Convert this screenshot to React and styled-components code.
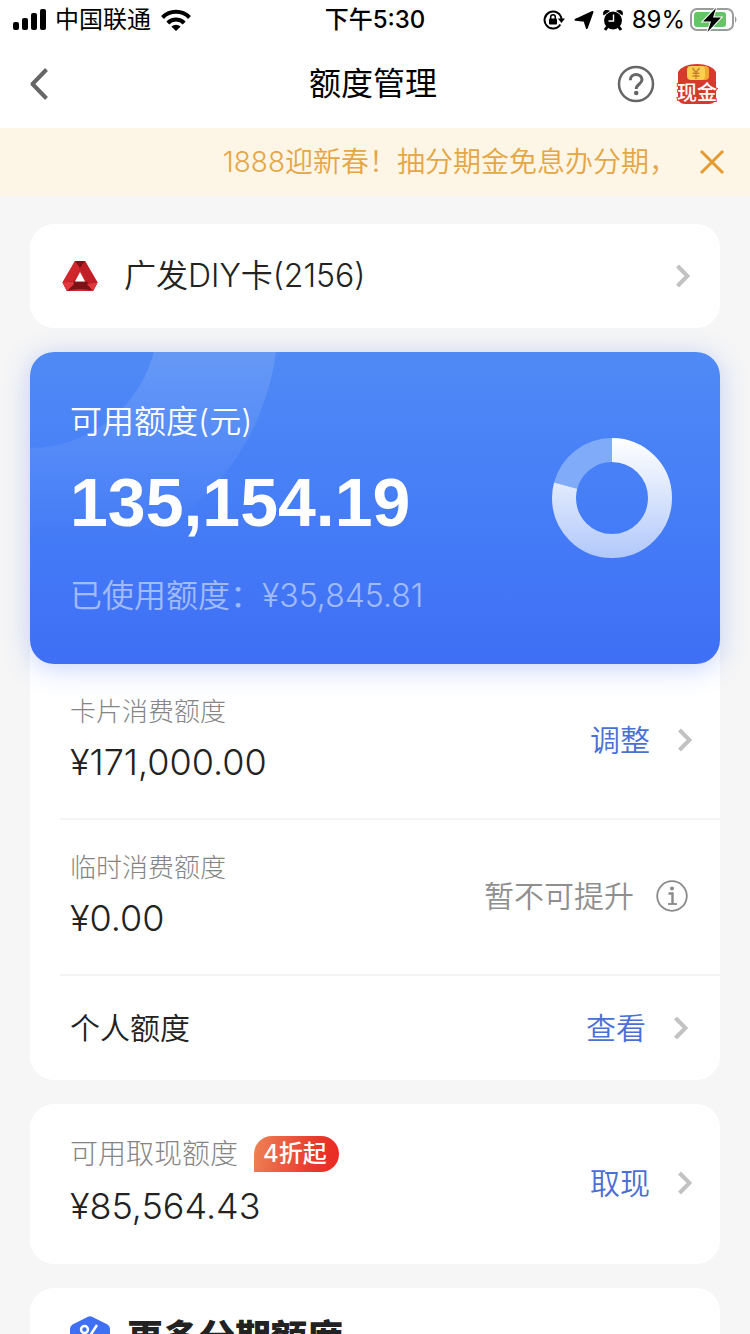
import React from "react";
import styled, { createGlobalStyle } from "styled-components";

const GlobalStyle = createGlobalStyle`
  *, *::before, *::after { box-sizing: border-box; }
  html, body { margin: 0; background: #f6f6f6; }
  body {
    font-family: Inter, "Noto Sans CJK SC", sans-serif;
    color: #222;
    font-weight: 350;
  }
  button { font: inherit; color: inherit; background: none; border: 0; padding: 0; cursor: pointer; }
  a { color: inherit; text-decoration: none; }
  h1, h2, p { margin: 0; font-weight: inherit; }
  svg { display: block; flex: none; }
`;

const Page = styled.div`
  height: 100vh;
  overflow-x: hidden;
  overflow-y: auto;
  scrollbar-width: none;
`;

const StatusBar = styled.div`
  display: grid;
  grid-template-columns: 1fr auto 1fr;
  align-items: center;
  height: 40px;
  padding: 0 12px;
  background: #fff;
  color: #000;
  font-size: 24px;
  font-weight: 400;
  line-height: 40px;
`;

const StatusGroup = styled.div`
  display: flex;
  align-items: center;
  justify-content: ${(p) => (p.$end ? "flex-end" : "flex-start")};
  gap: 9px;
`;

const Clock = styled.div`
  font-weight: 500;
`;

const Percent = styled.span`
  margin-right: -4px;
`;

const NavBar = styled.header`
  display: grid;
  grid-template-columns: 1fr auto 1fr;
  align-items: center;
  height: 88px;
  padding: 0 32px 0 28px;
  background: #fff;
`;

const NavTitle = styled.h1`
  font-size: 32px;
  line-height: 46px;
  font-weight: 400;
  color: #000;
`;

const NavTools = styled.div`
  display: flex;
  justify-content: flex-end;
  align-items: center;
  gap: 21px;
`;

const NavButton = styled.button`
  justify-self: start;
`;

const Notice = styled.div`
  display: flex;
  align-items: center;
  justify-content: flex-end;
  height: 68px;
  padding: 0 25px;
  gap: 22px;
  background: #fdf5e6;
  color: #e5a645;
  font-size: 28px;
  line-height: 40px;
  white-space: nowrap;
`;

const Content = styled.main`
  display: flex;
  flex-direction: column;
  gap: 24px;
  padding: 28px 30px;
`;

const Card = styled.section`
  background: #fff;
  border-radius: 24px;
`;

const CardPicker = styled.button`
  display: flex;
  align-items: center;
  width: 100%;
  height: 104px;
  padding: 0 30px 0 32px;
  gap: 26px;
  font-size: 32px;
  line-height: 44px;
  text-align: left;
`;

const CardName = styled.span`
  flex: 1;
`;

const Hero = styled.div`
  position: relative;
  display: flex;
  justify-content: space-between;
  align-items: flex-start;
  padding: 48px 48px 46px 40px;
  border-radius: 24px;
  overflow: hidden;
  color: #fff;
  background: linear-gradient(180deg, #4f8af5 0%, #4780f7 40%, #3e6ff5 100%);
`;

const HeroShadow = styled.div`
  border-radius: 24px;
  box-shadow: 0 4px 28px rgba(62, 111, 245, 0.3);
`;

const HeroArc = styled.svg`
  position: absolute;
  top: 0;
  left: 0;
`;

const HeroText = styled.div`
  position: relative;
`;

const HeroLine = styled.p`
  font-size: 32px;
  line-height: 44px;
  opacity: ${(p) => (p.$faint ? 0.5 : 1)};
`;

const HeroAmount = styled.p`
  margin: 18px 0 32px;
  font-family: "Liberation Sans", sans-serif;
  font-size: 68px;
  line-height: 80px;
  font-weight: 700;
`;

const Donut = styled.svg`
  margin-top: 38px;
`;

const Row = styled.div`
  display: flex;
  align-items: center;
  justify-content: space-between;
  margin-left: 30px;
  padding: ${(p) => (p.$single ? "30px 0" : p.$large ? "32px 0 34px" : "30px 0 32px")};
  padding-left: 10px;
  padding-right: ${(p) => (p.$inset ? "32px" : "28px")};
  & + & { border-top: 2px solid #f4f4f4; }
`;

const Quota = styled.div`
  display: grid;
  gap: ${(p) => (p.$large ? 10 : 8)}px;
`;

const QuotaLabel = styled.div`
  display: flex;
  align-items: center;
  gap: 16px;
  font-size: ${(p) => (p.$large ? 28 : 26)}px;
  line-height: 36px;
  font-weight: 300;
  color: #858585;
`;

const QuotaValue = styled.div`
  font-size: 36px;
  line-height: 48px;
`;

const RowTitle = styled.span`
  font-size: 30px;
  line-height: 44px;
`;

const Action = styled.a`
  display: flex;
  align-items: center;
  gap: 28px;
  font-size: 30px;
  line-height: 44px;
  color: #4a6fd6;
`;

const Unavailable = styled.div`
  display: flex;
  align-items: center;
  gap: 22px;
  font-size: 30px;
  line-height: 44px;
  color: #8f8f8f;
`;

const Badge = styled.span`
  height: 36px;
  padding: 0 12px 0 9px;
  border-radius: 18px 18px 18px 0;
  background: linear-gradient(100deg, #ee8354 0%, #e8382c 70%, #ea2a23 100%);
  color: #fff;
  font-size: 24px;
  font-weight: 500;
`;

const MoreHeading = styled.h2`
  display: flex;
  align-items: center;
  gap: 17px;
  padding: 24px 40px;
  font-size: 36px;
  line-height: 52px;
  font-weight: 900;
`;

function Chevron() {
  return (
    <svg width="14" height="24" viewBox="0 0 14 24" fill="none" stroke="#c2c2c2" strokeWidth="4">
      <path d="M1.5 2 11.5 12 1.5 22" />
    </svg>
  );
}

function SignalIcon() {
  return (
    <svg width="34" height="22" viewBox="0 0 34 22">
      <rect x="1" y="13" width="6" height="8" rx="2" />
      <rect x="10" y="9" width="6" height="12" rx="2" />
      <rect x="19" y="4" width="6" height="17" rx="2" />
      <rect x="28" y="0" width="6" height="21" rx="2" />
    </svg>
  );
}

function WifiIcon() {
  return (
    <svg width="32" height="24" viewBox="0 0 32 24" fill="none" stroke="#000" strokeWidth="4">
      <path d="M2.5 9.5A19 19 0 0 1 29.500 9.500" />
      <path d="M7.800 15A11.500 11.500 0 0 1 24.200 15" />
      <path d="M16 23 11.300 18.500Q16 14.800 20.700 18.500Z" fill="#000" stroke="none" />
    </svg>
  );
}

function LockIcon() {
  return (
    <svg width="22" height="22" viewBox="0 0 22 22" fill="none" stroke="#000" strokeWidth="2">
      <path d="M17.300 15.500A8.500 8.500 0 1 1 18.500 10" />
      <path d="M14.800 9.500H22L18.400 14Z" fill="#000" stroke="none" />
      <rect x="6" y="9.500" width="8" height="6" rx="1" fill="#000" stroke="none" />
      <path d="M7.700 10V8a2.300 2.300 0 0 1 4.600 0v2" strokeWidth="1.500" />
    </svg>
  );
}

function LocationIcon() {
  return (
    <svg width="20" height="20" viewBox="0 0 20 20">
      <path
        d="M18.500 2 12.800 18 10.500 10.800 1.500 9.800Z"
        stroke="#000"
        strokeWidth="2"
        strokeLinejoin="round"
      />
    </svg>
  );
}

function AlarmIcon() {
  return (
    <svg width="20" height="22" viewBox="0 0 20 22">
      <circle cx="10" cy="11.500" r="9" />
      <path d="M.5 6.500Q-1 2 2.500 1Q5.500 .5 7 2ZM19.500 6.500Q21 2 17.500 1Q14.500 .5 13 2Z" />
      <path d="M4.500 17.500 2 21M15.500 17.500 18 21" stroke="#000" strokeWidth="3" />
      <path d="M10.500 5.500V12H5.500" fill="none" stroke="#fff" strokeWidth="1.400" />
    </svg>
  );
}

function BatteryIcon() {
  return (
    <svg width="48" height="26" viewBox="0 0 48 26">
      <rect x="1" y="2" width="42" height="21" rx="6" fill="#fff" stroke="#9b9b9b" strokeWidth="2" />
      <rect x="4" y="5" width="32" height="15" rx="3" fill="#65c466" />
      <path d="M45 9Q48 12.500 45 16Z" fill="#9b9b9b" />
      <path d="M26 1 13 14.500H21L17.500 25 31 10.500H23Z" stroke="#fff" strokeWidth="2" paintOrder="stroke" />
    </svg>
  );
}

function BackIcon() {
  return (
    <svg width="22" height="34" viewBox="0 0 22 34" fill="none" stroke="#666" strokeWidth="4">
      <path d="M18.500 2.500 4.500 17 18.500 31.500" strokeLinejoin="round" />
    </svg>
  );
}

function HelpIcon() {
  return (
    <svg width="38" height="38" viewBox="0 0 38 38" fill="none" stroke="#666">
      <circle cx="19" cy="19" r="17" strokeWidth="2.500" />
      <path d="M13.300 15.200C13.300 7.500 25 7.800 25 14.800C25 19 19.200 19 19.200 24" strokeWidth="3" />
      <circle cx="19.200" cy="28" r="2.300" fill="#666" stroke="none" />
    </svg>
  );
}

function CashIcon() {
  return (
    <svg width="42" height="42" viewBox="1 0 42 42">
      <path d="M3 9Q8 1 22 1Q36 1 41 9V34Q41 41 34 41H10Q3 41 3 34Z" fill="#d63a2a" />
      <rect x="14" y="3" width="20" height="14" rx="4" fill="#f0a92f" />
      <rect x="12" y="3" width="18" height="14" rx="4" fill="#fbcf4c" />
      <path d="M17.500 5 21 9.500 24.500 5M21 9.500V16M17.500 10.200H24.500M17.500 13H24.500" fill="none" stroke="#c9822c" strokeWidth="1.500" />
      <text
        x="22"
        y="37"
        textAnchor="middle"
        fontFamily="Noto Sans CJK SC, sans-serif"
        fontSize="20"
        fontWeight="500"
        fill="#fff"
        stroke="#d63a2a"
        strokeWidth="2"
        paintOrder="stroke"
      >
        现金
      </text>
    </svg>
  );
}

function CloseIcon() {
  return (
    <svg width="26" height="26" viewBox="0 0 26 26" stroke="#e39a2e" strokeWidth="3">
      <path d="M2 2 24 24M24 2 2 24" />
    </svg>
  );
}

function BankLogo() {
  return (
    <svg width="36" height="32" viewBox="0 0 36 32">
      <path d="M13 1H23L35.500 22.500 31 31H5L.5 22.500Z" fill="#c8242b" />
      <path d="M13 1H23L20 9H16Z" fill="#7c1216" />
      <path d="M13 1 .5 22.500 5 31 11 20 18 8Z" fill="#d2262d" />
      <path d="M7 21.500 29 21.500 32 30 5 31Z" fill="#7c1216" />
      <path d="M.5 22.500 11 21.500 12 24 5 31Z" fill="#e0383e" />
      <path d="M23 1 35.500 22.500 31 31 25 21 18 8Z" fill="#c01f27" />
      <path d="M35.500 22.500 31 31 25 24Z" fill="#e0383e" />
      <path d="M5 31Q18 27 31 31Z" fill="#d2262d" />
      <path d="M18 12 23 21.500H13Z" fill="#fff" />
    </svg>
  );
}

function InfoIcon() {
  return (
    <svg width="32" height="32" viewBox="0 0 32 32" fill="none" stroke="#8a8a8a">
      <circle cx="16" cy="16" r="14.800" strokeWidth="1.800" />
      <circle cx="16" cy="8.500" r="2" fill="#8a8a8a" stroke="none" />
      <path d="M12.500 13.500H16.500V24" strokeWidth="2.400" />
      <path d="M12 24H21" strokeWidth="1.800" />
    </svg>
  );
}

function HexIcon() {
  return (
    <svg width="40" height="44" viewBox="0 0 40 44" fill="none">
      <path
        d="M17.500 1Q20 -.5 22.500 1L37.500 8.500Q40 10 40 13V31Q40 34 37.500 35.500L22.500 43Q20 44.500 17.500 43L2.500 35.500Q0 34 0 31V13Q0 10 2.500 8.500Z"
        fill="#3e6ff5"
      />
      <circle cx="14.500" cy="13.500" r="3.500" stroke="#fff" strokeWidth="2.500" />
      <circle cx="25" cy="25" r="3.500" stroke="#fff" strokeWidth="2.500" />
      <path d="M27 9 14 29" stroke="#fff" strokeWidth="2.500" />
    </svg>
  );
}

function UsageDonut({ used, total }) {
  const length = 2 * Math.PI * 48;
  const available = (1 - used / total) * length;
  return (
    <Donut width="120" height="120" viewBox="0 0 120 120" fill="none" strokeWidth="24">
      <defs>
        <linearGradient id="ring" gradientUnits="userSpaceOnUse" x1="0" y1="60" x2="120" y2="60">
          <stop offset="0" stopColor="#b1c8fb" />
          <stop offset="1" stopColor="#fff" />
        </linearGradient>
      </defs>
      <g transform="rotate(-90 60 60)">
        <circle
          cx="60" cy="60" r="48"
          stroke="#80abf8"
          strokeDasharray={`${length - available} ${available}`}
          strokeDashoffset={-available}
        />
        <circle cx="60" cy="60" r="48" stroke="url(#ring)" strokeDasharray={`${available} ${length}`} />
      </g>
    </Donut>
  );
}

export default function App() {
  return (
    <Page>
      <GlobalStyle />
      <StatusBar>
        <StatusGroup>
          <SignalIcon />
          <span>中国联通</span>
          <WifiIcon />
        </StatusGroup>
        <Clock>下午5:30</Clock>
        <StatusGroup $end>
          <LockIcon />
          <LocationIcon />
          <AlarmIcon />
          <Percent>89%</Percent>
          <BatteryIcon />
        </StatusGroup>
      </StatusBar>

      <NavBar>
        <NavButton type="button" aria-label="返回"><BackIcon /></NavButton>
        <NavTitle>额度管理</NavTitle>
        <NavTools>
          <NavButton type="button" aria-label="帮助"><HelpIcon /></NavButton>
          <NavButton type="button" aria-label="现金"><CashIcon /></NavButton>
        </NavTools>
      </NavBar>

      <Notice>
        <span>1888迎新春！抽分期金免息办分期，</span>
        <NavButton type="button" aria-label="关闭"><CloseIcon /></NavButton>
      </Notice>

      <Content>
        <Card>
          <CardPicker type="button">
            <BankLogo />
            <CardName>广发DIY卡(2156)</CardName>
            <Chevron />
          </CardPicker>
        </Card>

        <Card>
          <HeroShadow>
            <Hero>
              <HeroArc width="260" height="260" viewBox="0 0 260 260" fill="none">
                <defs>
                  <linearGradient id="arc" gradientUnits="userSpaceOnUse" x1="0" y1="0" x2="0" y2="190">
                    <stop offset="0" stopColor="#fff" stopOpacity="0.13" />
                    <stop offset="1" stopColor="#fff" stopOpacity="0" />
                  </linearGradient>
                </defs>
                <circle cx="0" cy="-32" r="188" stroke="url(#arc)" strokeWidth="120" />
              </HeroArc>
              <HeroText>
                <HeroLine>可用额度(元)</HeroLine>
                <HeroAmount>135,154.19</HeroAmount>
                <HeroLine $faint>已使用额度：¥35,845.81</HeroLine>
              </HeroText>
              <UsageDonut used={35845.81} total={171000} />
            </Hero>
          </HeroShadow>

          <Row>
            <Quota>
              <QuotaLabel>卡片消费额度</QuotaLabel>
              <QuotaValue>¥171,000.00</QuotaValue>
            </Quota>
            <Action href="#adjust">调整<Chevron /></Action>
          </Row>
          <Row $inset>
            <Quota>
              <QuotaLabel>临时消费额度</QuotaLabel>
              <QuotaValue>¥0.00</QuotaValue>
            </Quota>
            <Unavailable>暂不可提升<InfoIcon /></Unavailable>
          </Row>
          <Row $single $inset>
            <RowTitle>个人额度</RowTitle>
            <Action href="#personal">查看<Chevron /></Action>
          </Row>
        </Card>

        <Card>
          <Row $large>
            <Quota $large>
              <QuotaLabel $large>可用取现额度<Badge>4折起</Badge></QuotaLabel>
              <QuotaValue>¥85,564.43</QuotaValue>
            </Quota>
            <Action href="#cash">取现<Chevron /></Action>
          </Row>
        </Card>

        <Card>
          <MoreHeading><HexIcon />更多分期额度</MoreHeading>
        </Card>
      </Content>
    </Page>
  );
}
